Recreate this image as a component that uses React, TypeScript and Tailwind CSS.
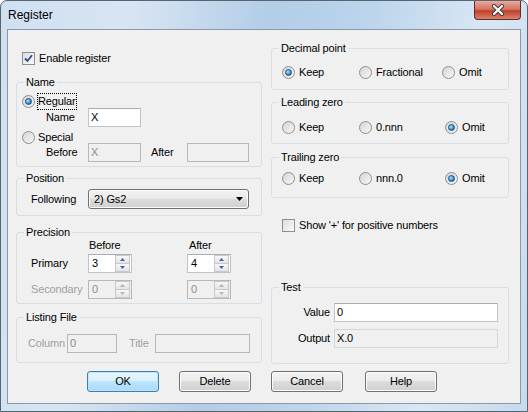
import React from "react";

const Radio = ({ checked }: { checked?: boolean }) => (
  <span className="w-[13px] h-[13px] shrink-0 rounded-full border border-[#8e8f8f] bg-[linear-gradient(135deg,#d4d4d4,#f8f8f8)] flex items-center justify-center">
    {checked && (
      <span className="w-[7px] h-[7px] rounded-full border border-[#1b4f80] bg-[radial-gradient(circle_at_35%_35%,#b6ecff,#3a8fd0_55%,#0f528f)]" />
    )}
  </span>
);

const Check = ({ checked }: { checked?: boolean }) => (
  <span className="w-[13px] h-[13px] shrink-0 border border-[#8e8f8f] bg-[linear-gradient(135deg,#dcdcdc,#fbfbfb)] flex items-center justify-center">
    {checked && (
      <svg width="9" height="9" viewBox="0 0 9 9">
        <path d="M1 4.5 L3.5 7 L8 1.2" fill="none" stroke="#34498a" strokeWidth="1.8" />
      </svg>
    )}
  </span>
);

const Opt = ({ checked, label, w }: { checked?: boolean; label: string; w?: string }) => (
  <div className={`flex items-center ${w ?? ""}`}>
    <Radio checked={checked} />
    <span className="ml-[4px]">{label}</span>
  </div>
);

const Group = ({ title, className, children }: { title: string; className: string; children?: React.ReactNode }) => (
  <fieldset className={`border border-[#d5dfe5] rounded-[3px] ${className}`}>
    <legend className="ml-[7px] px-[2px] leading-[13px]">{title}</legend>
    {children}
  </fieldset>
);

const TextBox = ({ value, w, disabled, readOnly }: { value?: string; w: string; disabled?: boolean; readOnly?: boolean }) => (
  <div
    className={`${w} h-[19px] border pl-[2px] leading-[17px] ${
      disabled
        ? "border-[#b8b8b8] text-[#8c8c8c]"
        : readOnly
        ? "border-[#d3d6db]"
        : "border-[#bfc3ca] border-t-[#abadb3] bg-white"
    }`}
  >
    {value}
  </div>
);

const Arrow = ({ up, disabled }: { up?: boolean; disabled?: boolean }) => (
  <svg width="5" height="3" viewBox="0 0 5 3">
    <path d={up ? "M0 3 L2.5 0 L5 3 Z" : "M0 0 L5 0 L2.5 3 Z"} fill={disabled ? "#b4b4b4" : "#3d6aa6"} />
  </svg>
);

const Spinner = ({ value, disabled }: { value: string; disabled?: boolean }) => (
  <div
    className={`w-[44px] h-[19px] border flex ${
      disabled ? "border-[#b8b8b8] text-[#8c8c8c]" : "border-[#bfc3ca] border-t-[#abadb3] bg-white"
    }`}
  >
    <span className="flex-1 pl-[3px] leading-[17px]">{value}</span>
    <div className="w-[16px] flex flex-col pr-[1px] py-[0px]">
      <div className="flex-1 border border-[#c9c9c9] bg-[linear-gradient(#f7f7f7,#e4e4e4)] flex items-center justify-center">
        <Arrow up disabled={disabled} />
      </div>
      <div className="flex-1 border border-[#c9c9c9] border-t-0 bg-[linear-gradient(#f7f7f7,#e4e4e4)] flex items-center justify-center">
        <Arrow disabled={disabled} />
      </div>
    </div>
  </div>
);

const Button = ({ label, def, className }: { label: string; def?: boolean; className?: string }) => (
  <div
    className={`w-[72px] h-[21px] rounded-[3px] border flex items-center justify-center ${
      def
        ? "border-[#3c7fb1] bg-[linear-gradient(#eaf6fd,#d9f0fc_45%,#bee6fd_50%,#a7d9f5)] shadow-[inset_0_0_0_1px_#bfe3f8]"
        : "border-[#707070] bg-[linear-gradient(#f2f2f2,#ebebeb_45%,#dddddd_50%,#cfcfcf)] shadow-[inset_0_0_0_1px_#fcfcfc]"
    } ${className ?? ""}`}
  >
    {label}
  </div>
);

export default function App() {
  return (
    <div className="w-[528px] h-[412px] font-['Liberation_Sans',Arial,sans-serif] text-[11px] tracking-[-0.15px] text-black">
      <div className="w-[528px] h-[412px] rounded-t-[7px] border border-[#58646f] bg-[linear-gradient(100deg,#cfe0f1_0%,#d7e5f3_22%,#b3cde8_45%,#bcd4ec_62%,#d9e7f4_82%,#c6daee_100%)] flex flex-col">
        {/* Title bar */}
        <div className="h-[28px] flex justify-between">
          <span className="pl-[7px] pt-[7px] text-[12px] leading-[15px] tracking-normal">Register</span>
          <div className="mr-[6px] w-[47px] h-[19px] rounded-b-[4px] border border-t-0 border-[#6b2a20] bg-[linear-gradient(#e9a99c,#d47563_45%,#c0402a_55%,#d8836f)] flex items-center justify-center">
            <svg width="14" height="12" viewBox="0 0 14 12">
              <path d="M3 2 L11 10 M11 2 L3 10" stroke="#3a3a3a" strokeWidth="4" strokeLinecap="round" />
              <path d="M3 2 L11 10 M11 2 L3 10" stroke="#ffffff" strokeWidth="2.2" strokeLinecap="round" />
            </svg>
          </div>
        </div>
        {/* Client */}
        <div className="ml-[6px] w-[514px] h-[375px] border border-[#8a98a8] bg-[#f0f0f0] flex flex-col">
          <div className="flex pl-[8px] gap-[9px]">
            {/* Left column */}
            <div className="w-[246px] flex flex-col">
              <div className="mt-[22px] h-[13px] pl-[6px] flex items-center">
                <Check checked />
                <span className="ml-[4px]">Enable register</span>
              </div>
              <Group title="Name" className="mt-[11px] h-[91px]">
                <div className="mt-[5px] h-[14px] pl-[5px] flex items-center">
                  <Radio checked />
                  <span className="ml-[2px] h-[17px] border border-dotted border-black leading-[15px] pr-[1px]">Regular</span>
                </div>
                <div className="h-[19px] pl-[29px] flex items-center">
                  <span className="w-[42px]">Name</span>
                  <TextBox value="X" w="w-[53px]" />
                </div>
                <div className="mt-[4px] h-[12px] pl-[5px] flex items-center">
                  <Radio />
                  <span className="ml-[3px]">Special</span>
                </div>
                <div className="h-[19px] pl-[29px] flex items-center">
                  <span className="w-[42px]">Before</span>
                  <TextBox value="X" w="w-[53px]" disabled />
                  <span className="ml-[10px] w-[36px]">After</span>
                  <TextBox w="w-[62px]" disabled />
                </div>
              </Group>
              <Group title="Position" className="mt-[5px] h-[44px]">
                <div className="mt-[4px] h-[20px] pl-[14px] flex items-center">
                  <span className="w-[57px]">Following</span>
                  <div className="w-[161px] h-[20px] rounded-[3px] border border-[#707070] bg-[linear-gradient(#f2f2f2,#ebebeb_45%,#dddddd_50%,#cfcfcf)] shadow-[inset_0_0_0_1px_#fcfcfc] flex items-center justify-between pl-[5px] pr-[5px]">
                    <span>2) Gs2</span>
                    <svg width="7" height="4" viewBox="0 0 7 4">
                      <path d="M0 0 L7 0 L3.5 4 Z" fill="#000" />
                    </svg>
                  </div>
                </div>
              </Group>
              <Group title="Precision" className="mt-[10px] h-[78px]">
                <div className="h-[13px] flex items-center leading-[13px]">
                  <span className="ml-[72px] w-[100px]">Before</span>
                  <span>After</span>
                </div>
                <div className="mt-[2px] h-[19px] pl-[14px] flex items-center">
                  <span className="w-[57px]">Primary</span>
                  <Spinner value="3" />
                  <span className="w-[55px]" />
                  <Spinner value="4" />
                </div>
                <div className="mt-[7px] h-[19px] pl-[14px] flex items-center">
                  <span className="w-[57px] text-[#a0a0a0]">Secondary</span>
                  <Spinner value="0" disabled />
                  <span className="w-[55px]" />
                  <Spinner value="0" disabled />
                </div>
              </Group>
              <Group title="Listing File" className="mt-[7px] h-[52px]">
                <div className="mt-[10px] h-[19px] pl-[11px] flex items-center">
                  <span className="w-[39px] text-[#a0a0a0]">Column</span>
                  <TextBox value="0" w="w-[50px]" disabled />
                  <span className="ml-[12px] w-[26px] text-[#a0a0a0]">Title</span>
                  <TextBox w="w-[95px]" disabled />
                </div>
              </Group>
            </div>
            {/* Right column */}
            <div className="w-[238px] flex flex-col">
              <Group title="Decimal point" className="mt-[12px] h-[48px]">
                <div className="mt-[10px] h-[14px] pl-[10px] flex items-center">
                  <Opt checked label="Keep" w="w-[77px]" />
                  <Opt label="Fractional" w="w-[83px]" />
                  <Opt label="Omit" />
                </div>
              </Group>
              <Group title="Leading zero" className="mt-[6px] h-[48px]">
                <div className="mt-[11px] h-[14px] pl-[10px] flex items-center">
                  <Opt label="Keep" w="w-[77px]" />
                  <Opt label="0.nnn" w="w-[86px]" />
                  <Opt checked label="Omit" />
                </div>
              </Group>
              <Group title="Trailing zero" className="mt-[7px] h-[47px]">
                <div className="mt-[7px] h-[14px] pl-[10px] flex items-center">
                  <Opt label="Keep" w="w-[77px]" />
                  <Opt label="nnn.0" w="w-[86px]" />
                  <Opt checked label="Omit" />
                </div>
              </Group>
              <div className="mt-[21px] h-[13px] pl-[11px] flex items-center">
                <Check />
                <span className="ml-[4px]">Show '+' for positive numbers</span>
              </div>
              <Group title="Test" className="mt-[49px] h-[83px]">
                <div className="mt-[9px] h-[19px] flex items-center">
                  <span className="w-[58px] text-right">Value</span>
                  <span className="w-[4px]" />
                  <TextBox value="0" w="w-[164px]" />
                </div>
                <div className="mt-[7px] h-[19px] flex items-center">
                  <span className="w-[58px] text-right">Output</span>
                  <span className="w-[4px]" />
                  <TextBox value="X.0" w="w-[164px]" readOnly />
                </div>
              </Group>
            </div>
          </div>
          <div className="mt-[7px] flex pl-[79px]">
            <Button label="OK" def />
            <Button label="Delete" className="ml-[20px]" />
            <Button label="Cancel" className="ml-[20px]" />
            <Button label="Help" className="ml-[22px]" />
          </div>
        </div>
      </div>
    </div>
  );
}
